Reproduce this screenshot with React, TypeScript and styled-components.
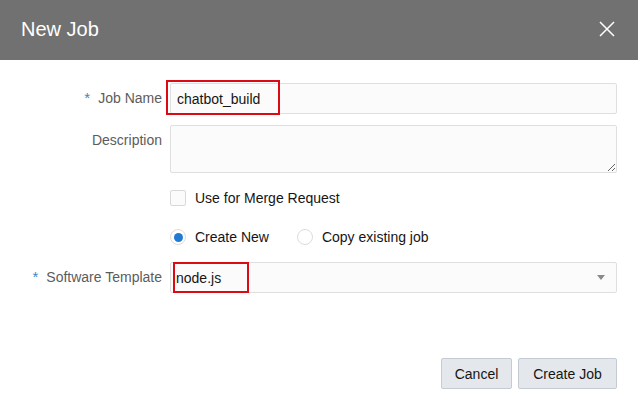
import React from "react";
import styled, { createGlobalStyle } from "styled-components";

const GlobalStyle = createGlobalStyle`
  html, body {
    margin: 0;
    padding: 0;
    background: #ffffff;
  }
  body {
    font-family: "Liberation Sans", Arial, sans-serif;
  }
`;

const Dialog = styled.div`
  width: 638px;
  height: 415px;
  background: #ffffff;
  display: flex;
  flex-direction: column;
`;

const Header = styled.div`
  height: 60px;
  background: #717171;
  display: flex;
  align-items: center;
  justify-content: space-between;
  padding: 0 21px;
  box-sizing: border-box;
`;

const Title = styled.h1`
  margin: 0;
  font-size: 20px;
  font-weight: normal;
  color: #ffffff;
  padding-bottom: 2px;
`;

const CloseButton = styled.button`
  border: none;
  background: none;
  padding: 0;
  width: 18px;
  height: 18px;
  display: flex;
  align-items: center;
  justify-content: center;
  cursor: pointer;
  margin-right: 1px;
  margin-bottom: 3px;
`;

const Form = styled.div`
  display: grid;
  grid-template-columns: 141px 1fr;
  column-gap: 8px;
  row-gap: 11px;
  padding: 23px 21px 0 21px;
`;

const Label = styled.label<{ $top?: boolean }>`
  font-size: 14px;
  color: #5c5c5c;
  text-align: right;
  height: 31px;
  line-height: 31px;
  white-space: nowrap;
  align-self: ${(p) => (p.$top ? "start" : "center")};
`;

const Required = styled.span`
  color: #3f86c7;
  margin-right: 8px;
  font-size: 15px;
  line-height: 1;
`;

const Field = styled.div<{ $height?: number }>`
  position: relative;
  height: ${(p) => p.$height ?? 31}px;
  display: flex;
  align-items: center;
`;

const TextInput = styled.input`
  width: 100%;
  height: 100%;
  box-sizing: border-box;
  border: 1px solid #dfdfdf;
  border-radius: 2px;
  background: #fbfbfb;
  padding: 0 6px;
  font-family: inherit;
  font-size: 14px;
  color: #161513;
  outline: none;
`;

const TextArea = styled.textarea`
  width: 100%;
  height: 100%;
  box-sizing: border-box;
  border: 1px solid #dfdfdf;
  border-radius: 2px;
  background: #fbfbfb;
  padding: 6px;
  font-family: inherit;
  font-size: 14px;
  resize: vertical;
  outline: none;
`;

const Highlight = styled.span<{ $left: number; $top: number; $w: number; $h: number }>`
  position: absolute;
  left: ${(p) => p.$left}px;
  top: ${(p) => p.$top}px;
  width: ${(p) => p.$w}px;
  height: ${(p) => p.$h}px;
  border: 2px solid #dc0a14;
  box-sizing: border-box;
  pointer-events: none;
`;

const Select = styled.div`
  width: 100%;
  height: 100%;
  box-sizing: border-box;
  border: 1px solid #dfdfdf;
  border-radius: 2px;
  background: #fbfbfb;
  padding: 0 11px 0 5px;
  display: flex;
  align-items: center;
  justify-content: space-between;
  font-size: 14px;
  color: #161513;
`;

const Caret = styled.span`
  width: 0;
  height: 0;
  border-left: 4px solid transparent;
  border-right: 4px solid transparent;
  border-top: 5px solid #8a8a8a;
`;

const Spacer = styled.div``;

const OptionRow = styled.div`
  height: 28px;
  display: flex;
  align-items: center;
  font-size: 14px;
  color: #161513;
`;

const Option = styled.label<{ $gap?: number }>`
  display: flex;
  align-items: center;
  gap: 9px;
  margin-right: ${(p) => p.$gap ?? 0}px;
  cursor: pointer;
`;

const CheckBox = styled.span`
  width: 16px;
  height: 16px;
  box-sizing: border-box;
  border: 1px solid #d9d9d9;
  border-radius: 2px;
  background: #fbfbfb;
`;

const Radio = styled.span<{ $checked?: boolean }>`
  width: 16px;
  height: 16px;
  box-sizing: border-box;
  border: 1px solid #dcdcdc;
  border-radius: 50%;
  background: #ffffff;
  display: flex;
  align-items: center;
  justify-content: center;
  &::after {
    content: "";
    width: 9px;
    height: 9px;
    border-radius: 50%;
    background: ${(p) => (p.$checked ? "#227bd2" : "transparent")};
  }
`;

const Footer = styled.div`
  display: flex;
  justify-content: flex-end;
  gap: 6px;
  padding: 65px 21px 0 0;
`;

const Button = styled.button<{ $w: number }>`
  width: ${(p) => p.$w}px;
  height: 31px;
  box-sizing: border-box;
  padding: 0;
  border: 1px solid #c4cbd2;
  border-radius: 2px;
  background: #e4e8ec;
  font-family: inherit;
  font-size: 14px;
  color: #161513;
  cursor: pointer;
`;

export default function App() {
  return (
    <>
      <GlobalStyle />
      <Dialog>
        <Header>
          <Title>New Job</Title>
          <CloseButton aria-label="Close">
            <svg width="16" height="16" viewBox="0 0 16 16">
              <path d="M1 1 L15 15 M15 1 L1 15" stroke="#ffffff" strokeWidth="1.5" fill="none" />
            </svg>
          </CloseButton>
        </Header>

        <Form>
          <Label>
            <Required>*</Required>Job Name
          </Label>
          <Field>
            <TextInput defaultValue="chatbot_build" />
            <Highlight $left={-4} $top={-3} $w={114} $h={35} />
          </Field>

          <Label $top>Description</Label>
          <Field $height={48}>
            <TextArea />
          </Field>

          <Spacer />
          <OptionRow>
            <Option>
              <CheckBox />
              Use for Merge Request
            </Option>
          </OptionRow>

          <Spacer />
          <OptionRow>
            <Option $gap={28}>
              <Radio $checked />
              Create New
            </Option>
            <Option>
              <Radio />
              Copy existing job
            </Option>
          </OptionRow>

          <Label>
            <Required>*</Required>Software Template
          </Label>
          <Field>
            <Select>
              <span>node.js</span>
              <Caret />
            </Select>
            <Highlight $left={3} $top={0} $w={76} $h={31} />
          </Field>
        </Form>

        <Footer>
          <Button $w={71}>Cancel</Button>
          <Button $w={99}>Create Job</Button>
        </Footer>
      </Dialog>
    </>
  );
}
